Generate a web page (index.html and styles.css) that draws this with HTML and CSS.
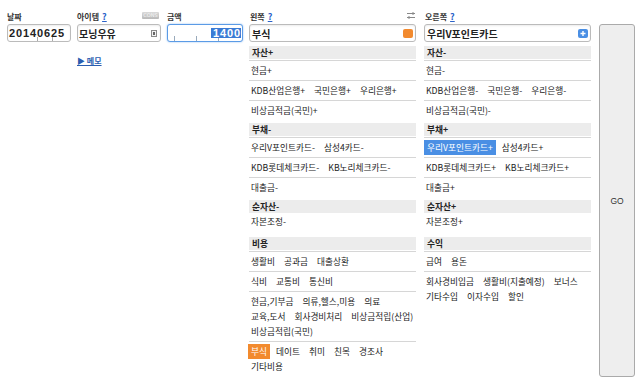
FILE: index.html
```html
<!DOCTYPE html>
<html>
<head>
    <title>가계부 입력</title>
    <link rel="stylesheet" href="styles.css">
</head>
<body>
    <div class="page">
        <!-- 날짜 -->
        <div class="field f-date">
            <div class="lbl">날짜</div>
            <div class="box date-box">20140625</div>
        </div>
        <!-- 아이템 -->
        <div class="field f-item">
            <div class="lbl">아이템<a class="help">?</a><span class="cons">CONS</span></div>
            <div class="box item-box">
                <span>모닝우유</span>
                <svg class="card-ico" width="6" height="7" viewBox="0 0 6 7"><rect x="0.5" y="0.5" width="5" height="6" fill="#f2f2f2" stroke="#8a8a8a"/><rect x="2" y="2" width="2" height="3" fill="#666"/></svg>
            </div>
            <a class="memo">&#9654; 메모</a>
        </div>
        <!-- 금액 -->
        <div class="field f-amt">
            <div class="lbl">금액</div>
            <div class="box amt-box"><span class="sel">1400</span></div>
        </div>

        <!-- 왼쪽 계정 -->
        <div class="side">
            <div class="lbl"><span>왼쪽<a class="help">?</a></span>
                <svg class="swap" width="10" height="7" viewBox="0 0 10 7"><path d="M1 1.5h8M7 0v3M1 5.5h8M3 4v3" stroke="#888" stroke-width="1" fill="none"/></svg>
            </div>
            <div class="box acc-box"><span>부식</span><span class="chip orange"></span></div>
            <div class="list">
                <div class="sec">
                    <div class="head">자산+</div>
                    <div class="row"><span>현금+</span></div>
                    <div class="row"><span>KDB산업은행+</span><span>국민은행+</span><span>우리은행+</span></div>
                    <div class="row"><span>비상금적금(국민)+</span></div>
                </div>
                <div class="sec">
                    <div class="head">부채-</div>
                    <div class="row"><span>우리V포인트카드-</span><span>삼성4카드-</span></div>
                    <div class="row"><span>KDB롯데체크카드-</span><span>KB노리체크카드-</span></div>
                    <div class="row"><span>대출금-</span></div>
                </div>
                <div class="sec">
                    <div class="head">순자산-</div>
                    <div class="row plain"><span>자본조정-</span></div>
                </div>
                <div class="sec">
                    <div class="head">비용</div>
                    <div class="row"><span>생활비</span><span>공과금</span><span>대출상환</span></div>
                    <div class="row"><span>식비</span><span>교통비</span><span>통신비</span></div>
                    <div class="row multi">
                        <div class="line"><span>현금,기부금</span><span>의류,헬스,미용</span><span>의료</span></div>
                        <div class="line"><span>교육,도서</span><span>회사경비처리</span><span>비상금적립(산업)</span></div>
                        <div class="line"><span>비상금적립(국민)</span></div>
                    </div>
                    <div class="row multi">
                        <div class="line"><span class="on-orange">부식</span><span>데이트</span><span>취미</span><span>친목</span><span>경조사</span></div>
                        <div class="line"><span>기타비용</span></div>
                    </div>
                </div>
            </div>
        </div>

        <!-- 오른쪽 계정 -->
        <div class="side">
            <div class="lbl"><span>오른쪽<a class="help">?</a></span></div>
            <div class="box acc-box"><span>우리V포인트카드</span>
                <svg class="plus" width="10" height="9" viewBox="0 0 10 9"><rect width="10" height="9" rx="2" fill="#4a8fe4"/><path d="M5 2v5M2.5 4.5h5" stroke="#fff" stroke-width="1.4"/></svg>
            </div>
            <div class="list">
                <div class="sec">
                    <div class="head">자산-</div>
                    <div class="row"><span>현금-</span></div>
                    <div class="row"><span>KDB산업은행-</span><span>국민은행-</span><span>우리은행-</span></div>
                    <div class="row"><span>비상금적금(국민)-</span></div>
                </div>
                <div class="sec">
                    <div class="head">부채+</div>
                    <div class="row"><span class="on-blue">우리V포인트카드+</span><span>삼성4카드+</span></div>
                    <div class="row"><span>KDB롯데체크카드+</span><span>KB노리체크카드+</span></div>
                    <div class="row"><span>대출금+</span></div>
                </div>
                <div class="sec">
                    <div class="head">순자산+</div>
                    <div class="row plain"><span>자본조정+</span></div>
                </div>
                <div class="sec">
                    <div class="head">수익</div>
                    <div class="row"><span>급여</span><span>용돈</span></div>
                    <div class="row multi">
                        <div class="line"><span>회사경비입금</span><span>생활비(지출예정)</span><span>보너스</span></div>
                        <div class="line"><span>기타수입</span><span>이자수입</span><span>할인</span></div>
                    </div>
                </div>
            </div>
        </div>

        <button class="go">GO</button>
    </div>
</body>
</html>
```

FILE: styles.css
```css
/* 가계부 입력 화면 */
body {
    margin: 0;
    background: #fff;
    color: #333;
    font-family: "Noto Sans CJK KR", "Noto Sans", sans-serif;
    font-size: 8px;
}

a {
    color: #2a5db0;
    text-decoration: underline;
    cursor: pointer;
}

.page {
    display: flex;
    align-items: flex-start;
    padding: 8px 0 0 7px;
}

.field {
    margin-right: 6px;
}
.f-date { width: 64px; }
.f-item { width: 84px; }
.f-amt { width: 76px; }

.side {
    width: 167px;
    margin-right: 8px;
}

/* labels */
.lbl {
    display: flex;
    align-items: center;
    height: 16px;
    font-weight: bold;
    color: #333;
}
.side .lbl {
    padding-left: 1px;
}
.help {
    margin-left: 3px;
    font-size: 9px;
    color: #2a62c9;
}
.cons {
    margin: -1px 2px 0 auto;
    width: 17px;
    height: 7px;
    border-radius: 1px;
    background: linear-gradient(#dadada, #b9b9b9);
    color: #f5f5f5;
    font: 5px/7px "DejaVu Sans", sans-serif;
    text-align: center;
}
.swap {
    margin: -1px 0 0 auto;
}

/* input boxes */
.box {
    box-sizing: border-box;
    height: 18px;
    display: flex;
    align-items: center;
    padding: 0 2px;
    border: 1px solid #bbb;
    border-radius: 3px;
    background: #fff;
    box-shadow: inset 0 1px 2px rgba(0, 0, 0, 0.08);
    font-size: 10px;
    font-weight: bold;
    color: #222;
}
.item-box,
.acc-box {
    justify-content: space-between;
}
.item-box {
    padding-left: 1px;
    padding-right: 3px;
}
.date-box,
.amt-box {
    font: bold 11px "Liberation Sans", sans-serif;
    letter-spacing: 0.9px;
}
.date-box {
    padding-left: 1px;
    background:
        linear-gradient(#aaa, #aaa) 29px 100% / 1px 4px no-repeat,
        linear-gradient(#aaa, #aaa) 44px 100% / 1px 4px no-repeat,
        #fff;
}
.amt-box {
    justify-content: flex-end;
    padding-right: 1px;
    border-color: #5b9be6;
    box-shadow: 0 0 2px #8cbcf0;
    background:
        linear-gradient(#9ab, #9ab) 6px 100% / 1px 5px no-repeat,
        linear-gradient(#9ab, #9ab) 28px 100% / 1px 5px no-repeat,
        linear-gradient(#9ab, #9ab) 50px 100% / 1px 5px no-repeat,
        #fff;
}
.amt-box .sel {
    background: #3a7bd5;
    color: #fff;
    line-height: 10px;
    padding-left: 2px;
}
.chip {
    width: 10px;
    height: 9px;
    border-radius: 2px;
}
.chip.orange {
    background: #f28a2e;
}

.memo {
    display: inline-block;
    margin-top: 13px;
    line-height: 12px;
    font-weight: bold;
}

/* account lists */
.list {
    margin-top: 4px;
    font-size: 8.7px;
}
.sec + .sec {
    margin-top: 3px;
}
.head {
    height: 13px;
    line-height: 13px;
    margin-bottom: 1px;
    padding-left: 3px;
    background: #ececec;
    font-weight: bold;
    color: #222;
}
.row,
.line {
    display: flex;
    column-gap: 5px;
    white-space: nowrap;
}
.row {
    padding: 2px 0;
    border-top: 1px solid #d6d6d6;
    line-height: 15px;
    color: #222;
}
.row.multi {
    flex-direction: column;
}
.row span {
    padding: 0 2px;
}
.row.plain {
    border-top: 0;
    padding: 0 0 5px;
}
.row .on-orange {
    background: #f28a2e;
    color: #fff;
    padding: 0 3px;
    margin: 0 -1px;
}
.row .on-blue {
    background: #4a8fe4;
    color: #fff;
    padding: 0 3px;
    margin-right: -1px;
}

.go {
    width: 36px;
    height: 353px;
    margin-top: 16px;
    padding: 0;
    border: 1px solid #aaa;
    border-radius: 3px;
    background: #eee;
    color: #333;
    font: 8.5px "Liberation Sans", sans-serif;
}
```
